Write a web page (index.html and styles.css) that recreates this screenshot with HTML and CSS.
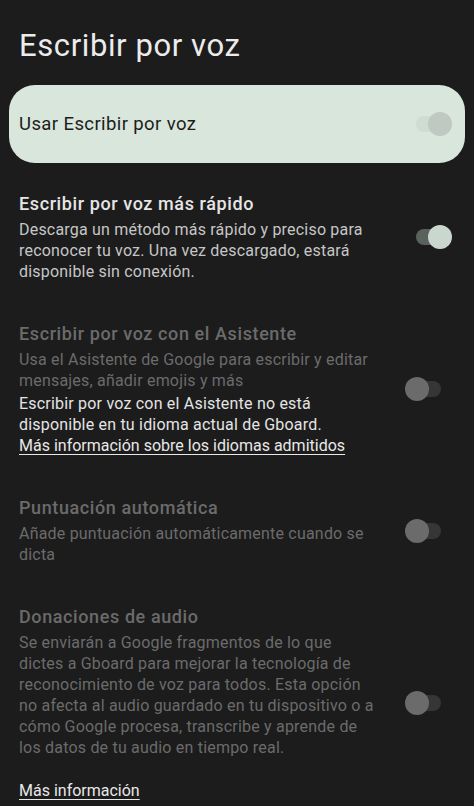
FILE: index.html
```html
<!DOCTYPE html>
<html lang="es">
<head>
  <meta charset="UTF-8">
  <meta name="viewport" content="width=device-width, initial-scale=1">
  <title>Escribir por voz</title>
  <link rel="stylesheet" href="styles.css">
</head>
<body>

  <h1>Escribir por voz</h1>

  <div class="main-card">
    <span class="main-label">Usar Escribir por voz</span>
    <div class="switch-box">
      <div class="switch main"><div class="thumb"></div></div>
    </div>
  </div>

  <div class="row first">
    <div class="text">
      <div class="title">Escribir por voz más rápido</div>
      <div class="desc">Descarga un método más rápido y preciso para reconocer tu voz. Una vez descargado, estará disponible sin conexión.</div>
    </div>
    <div class="switch-box">
      <div class="switch on"><div class="thumb"></div></div>
    </div>
  </div>

  <div class="row disabled">
    <div class="text">
      <div class="title">Escribir por voz con el Asistente</div>
      <div class="desc">Usa el Asistente de Google para escribir y editar mensajes, añadir emojis y más</div>
      <div class="note">Escribir por voz con el Asistente no está disponible en tu idioma actual de Gboard.</div>
      <a class="link" href="#">Más información sobre los idiomas admitidos</a>
    </div>
    <div class="switch-box">
      <div class="switch off"><div class="thumb"></div></div>
    </div>
  </div>

  <div class="row disabled">
    <div class="text">
      <div class="title">Puntuación automática</div>
      <div class="desc">Añade puntuación automáticamente cuando se dicta</div>
    </div>
    <div class="switch-box">
      <div class="switch off"><div class="thumb"></div></div>
    </div>
  </div>

  <div class="row disabled">
    <div class="text">
      <div class="title">Donaciones de audio</div>
      <div class="desc">Se enviarán a Google fragmentos de lo que dictes a Gboard para mejorar la tecnología de reconocimiento de voz para todos. Esta opción no afecta al audio guardado en tu dispositivo o a cómo Google procesa, transcribe y aprende de los datos de tu audio en tiempo real.</div>
      <a class="link spaced" href="#">Más información</a>
    </div>
    <div class="switch-box">
      <div class="switch off"><div class="thumb"></div></div>
    </div>
  </div>

</body>
</html>
```

FILE: styles.css
```css
body {
  margin: 0;
  background: #1c1c1c;
  font-family: Roboto, 'Noto Sans', sans-serif;
  color: #e6e6e6;
  overflow: hidden;
}
h1 {
  font-size: 31px;
  font-weight: 400;
  letter-spacing: 0.6px;
  line-height: 36px;
  margin: 28px 0 21px 19px;
  color: #ececec;
}
.main-card {
  display: flex;
  align-items: center;
  margin: 0 9px;
  height: 78px;
  padding: 0 13px 0 10px;
  background: #d9e6dc;
  border-radius: 26px;
}
.main-label {
  flex: 1;
  font-size: 18.5px;
  letter-spacing: 0.4px;
  color: #1b1d1b;
}
.row {
  display: flex;
  align-items: center;
  padding: 20px 22px 20px 19px;
}
.row.first {
  margin-top: 9px;
}
.text {
  flex: 1;
}
.title {
  font-size: 18px;
  font-weight: 500;
  letter-spacing: 0.6px;
  line-height: 24px;
  margin-bottom: 3px;
  color: #e6e6e6;
}
.desc {
  font-size: 16px;
  letter-spacing: 0.2px;
  line-height: 21px;
  color: #c6c6c6;
}
.note {
  margin-top: 2px;
  font-size: 16px;
  letter-spacing: 0.2px;
  line-height: 21px;
  color: #e4e4e4;
}
.link {
  display: inline-block;
  font-size: 16px;
  line-height: 21px;
  color: #e8e8e8;
  text-decoration: underline;
  text-underline-offset: 3px;
}
.link.spaced {
  margin-top: 22px;
}
.disabled .title,
.disabled .desc {
  color: #6b6b6b;
}
.switch-box {
  width: 77px;
  display: flex;
  justify-content: flex-end;
}
.switch {
  width: 37px;
  height: 24px;
  display: flex;
  align-items: center;
  position: relative;
}
.switch::before {
  content: "";
  position: absolute;
  left: 1px;
  right: 1px;
  top: 4px;
  bottom: 4px;
  border-radius: 8px;
}
.thumb {
  position: relative;
  width: 24px;
  height: 24px;
  border-radius: 50%;
}
.switch.main,
.switch.on {
  justify-content: flex-end;
}
.switch.main::before {
  background: #cfdcd2;
}
.switch.main .thumb {
  background: #bfc9c2;
}
.switch.on::before {
  background: #5b625d;
}
.switch.on .thumb {
  background: #cad7ce;
}
.switch.off {
  margin-right: 10px;
}
.switch.off::before {
  background: #363636;
}
.switch.off .thumb {
  background: #6b6b6b;
}
```
